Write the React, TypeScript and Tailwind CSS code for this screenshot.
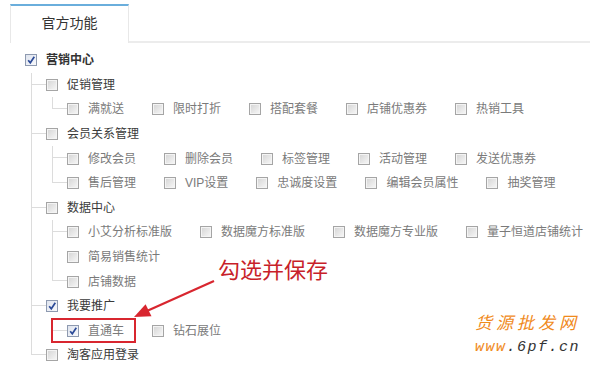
import React from "react";

type Group = {
  label: string;
  checked?: boolean;
  rows: string[][];
};

const groups: Group[] = [
  { label: "促销管理", rows: [["满就送", "限时打折", "搭配套餐", "店铺优惠券", "热销工具"]] },
  {
    label: "会员关系管理",
    rows: [
      ["修改会员", "删除会员", "标签管理", "活动管理", "发送优惠券"],
      ["售后管理", "VIP设置", "忠诚度设置", "编辑会员属性", "抽奖管理"],
    ],
  },
  {
    label: "数据中心",
    rows: [
      ["小艾分析标准版", "数据魔方标准版", "数据魔方专业版", "量子恒道店铺统计", "简易销售统计"],
      ["店铺数据"],
    ],
  },
  { label: "我要推广", checked: true, rows: [["直通车", "钻石展位"]] },
  { label: "淘客应用登录", rows: [] },
];

const checkedItems = ["直通车"];

function Box({ checked }: { checked?: boolean }) {
  return (
    <span
      className={
        checked
          ? "flex h-[12px] w-[12px] shrink-0 items-center justify-center border border-[#8e9ab0] bg-linear-to-br from-[#dfe4ee] to-[#f8f9fc]"
          : "flex h-[12px] w-[12px] shrink-0 border border-[#a5a5a5] bg-linear-to-br from-[#d4d4d4] to-[#f8f8f8] shadow-[inset_0_0_0_1px_#f4f4f4]"
      }
    >
      {checked && (
        <svg width="10" height="10" viewBox="0 0 10 10">
          <path d="M2.2 5.2 L4.3 7.8 L8.3 1.8" fill="none" stroke="#2c4b98" strokeWidth="1.7" />
        </svg>
      )}
    </span>
  );
}

function Branch({ last, children }: { last?: boolean; children: React.ReactNode }) {
  return (
    <div className="flex">
      <div className="flex w-[15px] shrink-0 flex-col">
        <div className="h-[12px] border-b border-l border-[#dcdcdc]" />
        {!last && <div className="flex-1 border-l border-[#dcdcdc]" />}
      </div>
      <div className="min-w-0 flex-1">{children}</div>
    </div>
  );
}

export default function App() {
  return (
    <div className="relative h-[371px] w-[590px] overflow-hidden bg-white font-['Liberation_Sans','Noto_Sans_CJK_SC',sans-serif]">
      {/* tab header */}
      <div className="flex pt-[4px]">
        <div className="ml-[10px] flex h-[39px] w-[119px] items-center justify-center border-x border-t-2 border-x-[#e8e8e8] border-t-[#6aaedc] pb-[3px] text-[14px] text-[#333]">
          官方功能
        </div>
        <div className="flex-1 border-b-2 border-[#ececec]" />
      </div>

      {/* tree */}
      <div className="pl-[25px] pt-[5px]">
        <div className="flex h-[24.6px] items-center gap-[9px]">
          <Box checked />
          <span className="text-[12px] font-bold text-[#333]">营销中心</span>
        </div>
        <div className="ml-[6px]">
          {groups.map((g, gi) => (
            <Branch key={g.label} last={gi === groups.length - 1}>
              <div className="flex h-[24.6px] items-center gap-[9px]">
                <Box checked={g.checked} />
                <span className="text-[12px] text-[#3a3a3a]">{g.label}</span>
              </div>
              {g.rows.length > 0 && (
                <div className="ml-[6px]">
                  {g.rows.map((row, ri) => (
                    <Branch key={ri} last={ri === g.rows.length - 1}>
                      <div className="flex flex-wrap gap-x-[28px]">
                        {row.map((item) => (
                          <div key={item} className="flex h-[24.6px] items-center gap-[9px]">
                            <Box checked={checkedItems.includes(item)} />
                            <span className="text-[12px] text-[#7a7a7a]">{item}</span>
                          </div>
                        ))}
                      </div>
                    </Branch>
                  ))}
                </div>
              )}
            </Branch>
          ))}
        </div>
      </div>

      {/* annotation */}
      <div className="absolute left-[51px] top-[318px] h-[25px] w-[85px] border-2 border-[#d8262f]" />
      <svg className="pointer-events-none absolute left-0 top-0" width="590" height="371">
        <line x1="214" y1="281" x2="148" y2="310.6" stroke="#d8262f" strokeWidth="2.2" />
        <polygon points="134,317 151.5,316.2 145.6,304.2" fill="#d8262f" />
      </svg>
      <div className="absolute left-[218px] top-[260px] text-[22px] leading-none text-[#c81f2a]">勾选并保存</div>

      {/* watermark */}
      <div className="absolute left-[475px] top-[315px] flex flex-col leading-none">
        <span className="text-[17px] italic tracking-[4px] text-[#f08a1c]">货源批发网</span>
        <span className="mt-[8px] font-['Liberation_Mono',monospace] text-[15px] italic tracking-[1.5px]">
          <span className="text-[#f08a1c]">www</span>
          <span className="text-[#333]">.6pf.cn</span>
        </span>
      </div>
    </div>
  );
}
